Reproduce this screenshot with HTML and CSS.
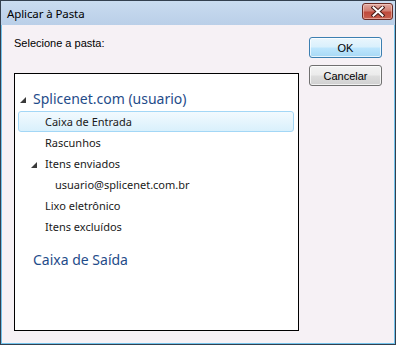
FILE: index.html
```html
<!DOCTYPE html>
<html>
<head>
<meta charset="utf-8">
<link rel="stylesheet" href="styles.css">
</head>
<body>
<div class="window">
  <div class="titlebar">
    <span class="title">Aplicar à Pasta</span>
    <button class="close" aria-label="Fechar">
      <svg width="14" height="11" viewBox="0 0 14 11">
        <path d="M2.5 1.5 L11.5 9.5 M11.5 1.5 L2.5 9.5" stroke="#4a1d18" stroke-width="4" stroke-linecap="square"/>
        <path d="M2.5 1.5 L11.5 9.5 M11.5 1.5 L2.5 9.5" stroke="#ffffff" stroke-width="2" stroke-linecap="square"/>
      </svg>
    </button>
  </div>
  <div class="client">
    <div class="left">
      <div class="label">Selecione a pasta:</div>
      <div class="tree">
        <div class="account">
          <svg class="tri" width="6" height="6" viewBox="0 0 6 6"><polygon points="6,0 6,6 0,6" fill="#3a3a3a"/></svg>
          <span>Splicenet.com (usuario)</span>
        </div>
        <div class="item selected">Caixa de Entrada</div>
        <div class="item">Rascunhos</div>
        <div class="item expander">
          <svg class="tri2" width="6" height="6" viewBox="0 0 6 6"><polygon points="6,0 6,6 0,6" fill="#3a3a3a"/></svg>
          <span>Itens enviados</span>
        </div>
        <div class="item sub">usuario@splicenet.com.br</div>
        <div class="item">Lixo eletrônico</div>
        <div class="item">Itens excluídos</div>
        <div class="account outbox"><span>Caixa de Saída</span></div>
      </div>
    </div>
    <div class="right">
      <button class="btn default">OK</button>
      <button class="btn">Cancelar</button>
    </div>
  </div>
</div>
</body>
</html>
```

FILE: styles.css
```css
html, body {
  margin: 0;
  padding: 0;
  background: #ffffff;
}

.window {
  width: 396px;
  height: 345px;
  box-sizing: border-box;
  border: 1px solid #33404f;
  display: flex;
  flex-direction: column;
  font-family: "Liberation Sans", Arial, sans-serif;
}

.titlebar {
  height: 24px;
  flex: none;
  background: linear-gradient(#c9dcf0, #bacfe8);
  display: flex;
  align-items: center;
  justify-content: space-between;
  padding: 0 2px 0 6px;
}

.title {
  font-family: "Noto Sans", sans-serif;
  font-size: 11.5px;
  color: #000;
  letter-spacing: -0.1px;
}

.close {
  width: 31px;
  height: 17px;
  margin-top: -4px;
  padding: 0;
  border: 1px solid #6a2b25;
  border-radius: 3px;
  background: linear-gradient(#e2aba2 0%, #d27f73 45%, #bf4a3c 55%, #c8604f 100%);
  display: flex;
  align-items: center;
  justify-content: center;
  box-shadow: inset 0 0 0 1px rgba(255, 220, 210, 0.5);
}

.client {
  flex: 1;
  background: #f6f1f5;
  border: 1px solid #73c3ec;
  border-top: none;
  display: flex;
  padding: 12px 0 0 12px;
}

.left {
  width: 285px;
  display: flex;
  flex-direction: column;
}

.label {
  font-size: 11px;
  line-height: 13px;
  color: #000;
}

.tree {
  margin-top: 23px;
  width: 285px;
  height: 258px;
  box-sizing: border-box;
  border: 1px solid #000;
  background: #fff;
  padding: 11px 4px 0 3px;
  font-family: "Noto Sans", sans-serif;
}

.account {
  height: 26px;
  display: flex;
  align-items: center;
  font-size: 14px;
  color: #1f4c8a;
  padding-left: 2px;
}

.account .tri {
  margin: 3px 7px 0 0;
}

.outbox {
  margin-top: 9px;
  padding-left: 15px;
}

.item {
  height: 21px;
  box-sizing: border-box;
  display: flex;
  align-items: center;
  padding-left: 26px;
  font-size: 11px;
  color: #1a1a1a;
  border: 1px solid transparent;
  border-radius: 3px;
}

.item.selected {
  border-color: #a3d7f6;
  background: linear-gradient(#f2fafe, #d9f0fc);
}

.item.expander {
  padding-left: 12px;
}

.item.expander .tri2 {
  margin: 2px 8px 0 0;
}

.item.sub {
  padding-left: 36px;
}

.right {
  margin-left: 10px;
  display: flex;
  flex-direction: column;
  gap: 7px;
}

.btn {
  width: 73px;
  height: 21px;
  padding: 0;
  font-family: "Liberation Sans", Arial, sans-serif;
  font-size: 11px;
  color: #000;
  border: 1px solid #707070;
  border-radius: 3px;
  background: linear-gradient(#f3f3f3 0%, #ebebeb 48%, #dddddd 52%, #d0d0d0 100%);
  box-shadow: inset 0 0 0 1px rgba(255, 255, 255, 0.7);
}

.btn.default {
  border-color: #3c7fb1;
  background: linear-gradient(#eaf6fd 0%, #d9f0fc 48%, #bee6fd 52%, #a7d9f5 100%);
}
```
